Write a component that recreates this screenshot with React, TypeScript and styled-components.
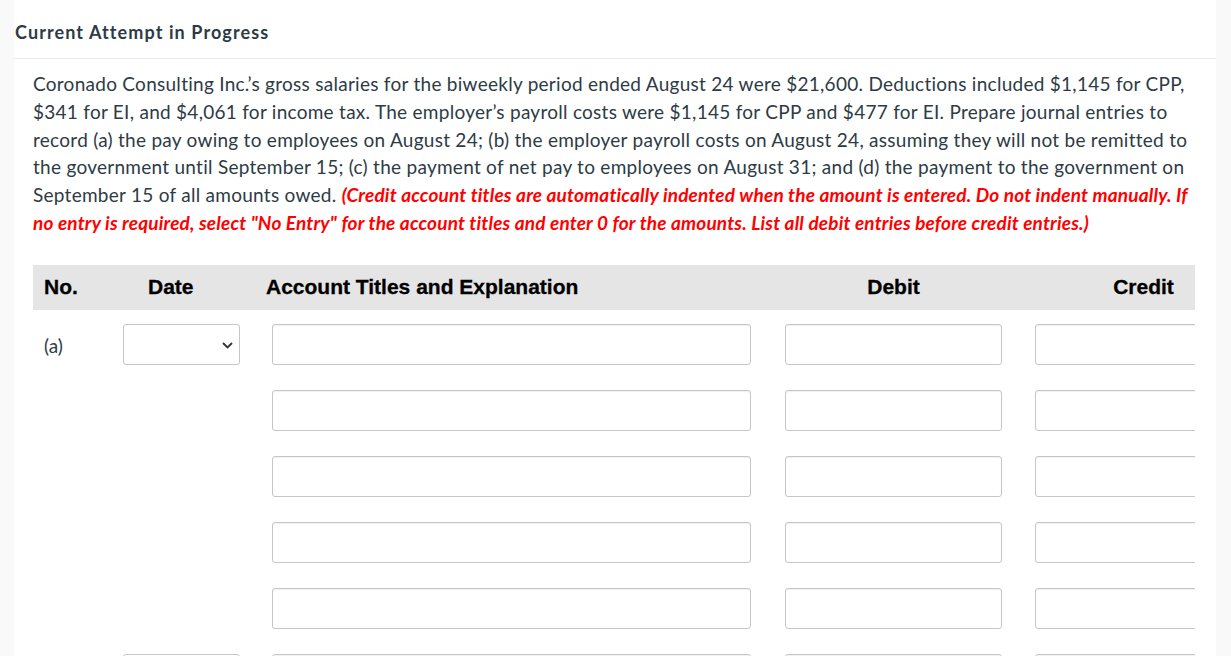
import React from 'react';
import styled, {createGlobalStyle} from 'styled-components';

const GlobalStyle = createGlobalStyle`
  html, body {
    margin: 0;
    padding: 0;
    background: #f9f9f9;
  }
  body {
    font-family: Lato, "Open Sans", sans-serif;
    color: #2d3b45;
  }
  * {
    box-sizing: border-box;
  }
`;

interface Entry {
  label: string;
  lines: number;
}

const entries: Entry[] = [
  {label: '(a)', lines: 5},
  {label: '(b)', lines: 3},
];

export default function App() {
  return (
    <>
      <GlobalStyle/>
      <Page>
        <Panel>
          <Title>Current Attempt in Progress</Title>
          <Body>
            <Question>
              Coronado Consulting Inc.’s gross salaries for the biweekly period ended August 24 were $21,600. Deductions included $1,145 for CPP, $341 for EI, and $4,061 for income tax. The employer’s payroll costs were $1,145 for CPP and $477 for EI. Prepare journal entries to record (a) the pay owing to employees on August 24; (b) the employer payroll costs on August 24, assuming they will not be remitted to the government until September 15; (c) the payment of net pay to employees on August 31; and (d) the payment to the government on September 15 of all amounts owed.{' '}
              <Note>(Credit account titles are automatically indented when the amount is entered. Do not indent manually. If no entry is required, select "No Entry" for the account titles and enter 0 for the amounts. List all debit entries before credit entries.)</Note>
            </Question>
            <TableScroll>
              <Grid>
                <HeadCell $indent={11}>No.</HeadCell>
                <HeadCell $indent={37}>Date</HeadCell>
                <HeadCell $indent={14}>Account Titles and Explanation</HeadCell>
                <HeadCell $indent={20}><Centered>Debit</Centered></HeadCell>
                <HeadCell $indent={20}><Centered>Credit</Centered></HeadCell>
                {entries.map(({label, lines}) => (
                  Array.from({length: lines}).map((_, i) => (
                    <React.Fragment key={`${label}-${i}`}>
                      <LabelCell>{i === 0 ? label : ''}</LabelCell>
                      <FieldCell $indent={12}>
                        {i === 0 && <DateSelect/>}
                      </FieldCell>
                      <FieldCell $indent={20}>
                        <TextBox $width={479}/>
                      </FieldCell>
                      <FieldCell $indent={20}>
                        <TextBox $width={217}/>
                      </FieldCell>
                      <FieldCell $indent={20}>
                        <TextBox $width={217}/>
                      </FieldCell>
                    </React.Fragment>
                  ))
                ))}
              </Grid>
            </TableScroll>
          </Body>
        </Panel>
      </Page>
    </>
  );
}

function DateSelect() {
  return (
    <SelectWrap>
      <SelectBox defaultValue="">
        <option value=""></option>
        <option value="aug24">Aug. 24</option>
      </SelectBox>
      <Chevron width="11" height="7" viewBox="0 0 11 7">
        <path d="M1 1l4.5 4.5L10 1" fill="none" stroke="#333" strokeWidth="1.8"/>
      </Chevron>
    </SelectWrap>
  );
}

const Page = styled.div`
  padding: 0 15px 0 14px;
  min-height: 100vh;
`;

const Panel = styled.div`
  background: #fff;
  min-height: 100vh;
`;

const Title = styled.div`
  height: 59px;
  display: flex;
  align-items: center;
  padding: 5px 0 0 1px;
  border-bottom: 1px solid #ececec;
  font-size: 18px;
  letter-spacing: 1.1px;
  font-weight: 700;
  color: #2d3b45;
`;

const Body = styled.div`
  padding: 11px 21px 0 19px;
`;

const Question = styled.p`
  margin: 0;
  font-size: 19px;
  letter-spacing: 0.27px;
  line-height: 27.8px;
  color: #2d3b45;
`;

const Note = styled.em`
  color: #f00;
  font-size: 19px;
  letter-spacing: 0.17px;
  font-weight: 700;
  font-style: italic;
`;

const TableScroll = styled.div`
  margin-top: 28px;
  overflow: hidden;
`;

const Grid = styled.div`
  display: grid;
  grid-template-columns: 78px 141px 513px 250px 250px;
  width: 1232px;
`;

const HeadCell = styled.div<{$indent: number}>`
  height: 45px;
  background: #e5e5e5;
  display: flex;
  align-items: center;
  padding-left: ${p => p.$indent}px;
  font-family: "Liberation Sans", Arial, sans-serif;
  font-weight: 700;
  font-size: 21px;
  color: #000;
  -webkit-text-stroke: 0.3px #000;
`;

const Centered = styled.span`
  width: 217px;
  text-align: center;
`;

const LabelCell = styled.div`
  padding: 24px 0 0 11px;
  font-size: 19px;
  color: #2d3b45;
`;

const FieldCell = styled.div<{$indent: number}>`
  padding: 14px 0 11px ${p => p.$indent}px;
  height: 66px;
`;

const TextBox = styled.input.attrs({type: 'text'})<{$width: number}>`
  width: ${p => p.$width}px;
  height: 41px;
  border: 1px solid #c6c6c6;
  border-radius: 3px;
  box-shadow: inset 0 1px 1px rgba(0, 0, 0, 0.06);
  background: #fff;
  font-family: Lato, sans-serif;
  font-size: 16px;
  padding: 0 8px;
`;

const SelectWrap = styled.div`
  position: relative;
  width: 117px;
  height: 41px;
`;

const SelectBox = styled.select`
  appearance: none;
  width: 100%;
  height: 100%;
  border: 1px solid #c6c6c6;
  border-radius: 3px;
  background: #fff;
  font-family: Lato, sans-serif;
  font-size: 16px;
  padding: 0 26px 0 8px;
  color: #2d3b45;
`;

const Chevron = styled.svg`
  position: absolute;
  right: 7px;
  top: 18px;
  pointer-events: none;
`;
